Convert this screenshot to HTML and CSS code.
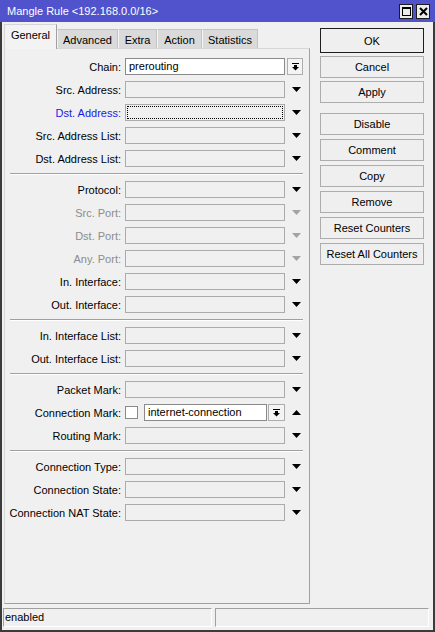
FILE: index.html
```html
<!DOCTYPE html>
<html>
<head>
<meta charset="utf-8">
<link rel="stylesheet" href="styles.css">
</head>
<body>
<div class="win">
  <div class="titlebar">
    <span class="title">Mangle Rule &lt;192.168.0.0/16&gt;</span>
    <div class="tbtns">
      <span class="tbtn"><svg width="9" height="9" viewBox="0 0 9 9"><rect x="0.5" y="0.5" width="8" height="8" fill="none" stroke="#000"/><rect x="0" y="0" width="9" height="2" fill="#000"/></svg></span>
      <span class="tbtn"><svg width="9" height="9" viewBox="0 0 9 9"><path d="M1 1 L8 8 M8 1 L1 8" stroke="#000" stroke-width="2"/></svg></span>
    </div>
  </div>
  <div class="body">
    <div class="main">
      <div class="left">
        <div class="tabs">
          <div class="tab active w1">General</div>
          <div class="tab w2">Advanced</div>
          <div class="tab w3">Extra</div>
          <div class="tab w4">Action</div>
          <div class="tab w5">Statistics</div>
        </div>
        <div class="panel">
          <div class="row"><span class="lbl">Chain:</span><div class="field edit">prerouting</div><div class="trail start"><span class="ddbtn"><svg width="7" height="8" viewBox="0 0 7 8"><rect x="0" y="0" width="7" height="1"/><rect x="2" y="2" width="3" height="2"/><polygon points="0,4 7,4 3.5,7.5"/></svg></span></div></div>
          <div class="row"><span class="lbl">Src. Address:</span><div class="field"></div><div class="trail"><svg class="arr" width="9" height="5" viewBox="0 0 9 5"><polygon points="0,0 9,0 4.5,5"/></svg></div></div>
          <div class="row"><span class="lbl blue">Dst. Address:</span><div class="field focus"></div><div class="trail"><svg class="arr" width="9" height="5" viewBox="0 0 9 5"><polygon points="0,0 9,0 4.5,5"/></svg></div></div>
          <div class="row"><span class="lbl">Src. Address List:</span><div class="field"></div><div class="trail"><svg class="arr" width="9" height="5" viewBox="0 0 9 5"><polygon points="0,0 9,0 4.5,5"/></svg></div></div>
          <div class="row"><span class="lbl">Dst. Address List:</span><div class="field"></div><div class="trail"><svg class="arr" width="9" height="5" viewBox="0 0 9 5"><polygon points="0,0 9,0 4.5,5"/></svg></div></div>
          <div class="sep"></div>
          <div class="row"><span class="lbl">Protocol:</span><div class="field"></div><div class="trail"><svg class="arr" width="9" height="5" viewBox="0 0 9 5"><polygon points="0,0 9,0 4.5,5"/></svg></div></div>
          <div class="row"><span class="lbl dis">Src. Port:</span><div class="field"></div><div class="trail"><svg class="arr dis" width="9" height="5" viewBox="0 0 9 5"><polygon points="0,0 9,0 4.5,5"/></svg></div></div>
          <div class="row"><span class="lbl dis">Dst. Port:</span><div class="field"></div><div class="trail"><svg class="arr dis" width="9" height="5" viewBox="0 0 9 5"><polygon points="0,0 9,0 4.5,5"/></svg></div></div>
          <div class="row"><span class="lbl dis">Any. Port:</span><div class="field"></div><div class="trail"><svg class="arr dis" width="9" height="5" viewBox="0 0 9 5"><polygon points="0,0 9,0 4.5,5"/></svg></div></div>
          <div class="row"><span class="lbl">In. Interface:</span><div class="field"></div><div class="trail"><svg class="arr" width="9" height="5" viewBox="0 0 9 5"><polygon points="0,0 9,0 4.5,5"/></svg></div></div>
          <div class="row"><span class="lbl">Out. Interface:</span><div class="field"></div><div class="trail"><svg class="arr" width="9" height="5" viewBox="0 0 9 5"><polygon points="0,0 9,0 4.5,5"/></svg></div></div>
          <div class="sep"></div>
          <div class="row"><span class="lbl">In. Interface List:</span><div class="field"></div><div class="trail"><svg class="arr" width="9" height="5" viewBox="0 0 9 5"><polygon points="0,0 9,0 4.5,5"/></svg></div></div>
          <div class="row"><span class="lbl">Out. Interface List:</span><div class="field"></div><div class="trail"><svg class="arr" width="9" height="5" viewBox="0 0 9 5"><polygon points="0,0 9,0 4.5,5"/></svg></div></div>
          <div class="sep"></div>
          <div class="row"><span class="lbl">Packet Mark:</span><div class="field"></div><div class="trail"><svg class="arr" width="9" height="5" viewBox="0 0 9 5"><polygon points="0,0 9,0 4.5,5"/></svg></div></div>
          <div class="row"><span class="lbl">Connection Mark:</span>
            <div class="combo"><span class="chk"></span><div class="field edit short">internet-connection</div><span class="ddbtn wide"><svg width="7" height="8" viewBox="0 0 7 8"><rect x="0" y="0" width="7" height="1"/><rect x="2" y="2" width="3" height="2"/><polygon points="0,4 7,4 3.5,7.5"/></svg></span></div>
            <div class="trail"><svg class="arr" width="9" height="5" viewBox="0 0 9 5"><polygon points="0,5 9,5 4.5,0"/></svg></div></div>
          <div class="row"><span class="lbl">Routing Mark:</span><div class="field"></div><div class="trail"><svg class="arr" width="9" height="5" viewBox="0 0 9 5"><polygon points="0,0 9,0 4.5,5"/></svg></div></div>
          <div class="sep"></div>
          <div class="row"><span class="lbl">Connection Type:</span><div class="field"></div><div class="trail"><svg class="arr" width="9" height="5" viewBox="0 0 9 5"><polygon points="0,0 9,0 4.5,5"/></svg></div></div>
          <div class="row"><span class="lbl">Connection State:</span><div class="field"></div><div class="trail"><svg class="arr" width="9" height="5" viewBox="0 0 9 5"><polygon points="0,0 9,0 4.5,5"/></svg></div></div>
          <div class="row"><span class="lbl">Connection NAT State:</span><div class="field"></div><div class="trail"><svg class="arr" width="9" height="5" viewBox="0 0 9 5"><polygon points="0,0 9,0 4.5,5"/></svg></div></div>
        </div>
      </div>
      <div class="buttons">
        <div class="btn ok">OK</div>
        <div class="btn">Cancel</div>
        <div class="btn">Apply</div>
        <div class="btn gap">Disable</div>
        <div class="btn">Comment</div>
        <div class="btn">Copy</div>
        <div class="btn">Remove</div>
        <div class="btn">Reset Counters</div>
        <div class="btn">Reset All Counters</div>
      </div>
    </div>
    <div class="status">
      <div class="sfield s1">enabled</div>
      <div class="sfield s2"></div>
    </div>
  </div>
</div>
</body>
</html>
```

FILE: styles.css
```css
html, body {
  margin: 0;
  padding: 0;
}
body {
  width: 435px;
  height: 632px;
  overflow: hidden;
  background: #f0f0f0;
  font-family: "Liberation Sans", Arial, sans-serif;
  font-size: 11px;
  color: #000;
}
.win {
  width: 435px;
  height: 632px;
  display: flex;
  flex-direction: column;
}
.titlebar {
  height: 22px;
  background: #5053cb;
  display: flex;
  align-items: center;
  justify-content: space-between;
  padding: 0 5px 0 7px;
  box-sizing: border-box;
  flex: none;
}
.title {
  color: #fff;
  font-size: 11px;
}
.tbtns {
  display: flex;
  gap: 3px;
}
.tbtn {
  width: 14px;
  height: 15px;
  box-sizing: border-box;
  border: 1px solid #1c1c1c;
  background: #ececec;
  display: flex;
  align-items: center;
  justify-content: center;
}
.body {
  flex: 1;
  border: 2px solid #3b3b3b;
  border-top: none;
  display: flex;
  flex-direction: column;
}
.main {
  display: flex;
  padding: 3px 0 0 2px;
  height: 583px;
  box-sizing: border-box;
}
.left {
  width: 306px;
  display: flex;
  flex-direction: column;
}
.tabs {
  height: 24px;
  display: flex;
  align-items: flex-end;
  margin-bottom: -1px;
}
.tab {
  height: 20px;
  box-sizing: border-box;
  background: #dadada;
  border: 1px solid #c4c4c4;
  border-left-color: #f4f4f4;
  border-bottom: 1px solid #a8a8a8;
  display: flex;
  align-items: center;
  justify-content: center;
  padding-top: 1px;
}
.tab.active {
  height: 25px;
  background: #f3f3f3;
  border: 1px solid #d6d6d6;
  border-right-color: #a0a0a0;
  border-bottom: none;
  position: relative;
  z-index: 1;
  padding-top: 0;
  padding-bottom: 4px;
}
.w1 { width: 53px; }
.w2 { width: 61px; }
.w3 { width: 39px; }
.w4 { width: 45px; }
.w5 { width: 56px; }
.panel {
  height: 556px;
  box-sizing: border-box;
  border: 1px solid #d6d6d6;
  border-right-color: #a0a0a0;
  border-bottom-color: #a0a0a0;
  padding-top: 6px;
}
.row {
  height: 23px;
  display: flex;
  align-items: center;
}
.lbl {
  width: 120px;
  box-sizing: border-box;
  padding-right: 4px;
  text-align: right;
  white-space: nowrap;
}
.lbl.blue { color: #1a1ae6; }
.lbl.dis { color: #8c8c8c; }
.field {
  width: 160px;
  height: 17px;
  box-sizing: border-box;
  border: 1px solid #ababab;
  background: #f0f0f0;
  padding: 0 3px;
  line-height: 15px;
  white-space: nowrap;
  overflow: hidden;
}
.field.edit {
  background: #fff;
  border-color: #8a8a8a;
}
.field.focus {
  outline: 1px dotted #000;
  outline-offset: -3px;
}
.field.short {
  width: 123px;
  margin-right: 1px;
}
.combo {
  width: 160px;
  display: flex;
  align-items: center;
}
.chk {
  width: 13px;
  height: 13px;
  box-sizing: border-box;
  border: 1px solid #8a8a8a;
  background: #fff;
  margin-right: 6px;
}
.trail {
  width: 18px;
  margin-left: 2px;
  display: flex;
  justify-content: center;
  align-items: center;
}
.trail.start {
  justify-content: flex-start;
}
.ddbtn {
  width: 16px;
  height: 17px;
  box-sizing: border-box;
  border: 1px solid #adadad;
  background: #f4f4f4;
  display: flex;
  align-items: center;
  justify-content: center;
  fill: #000;
}
.ddbtn.wide { width: 17px; }
.arr { fill: #000; }
.arr.dis { fill: #a3a3a3; }
.sep {
  height: 8px;
  margin: 0 6px 0 5px;
  display: flex;
  flex-direction: column;
  justify-content: center;
}
.sep::before {
  content: "";
  display: block;
  height: 1px;
  background: #a0a0a0;
  border-bottom: 1px solid #fff;
}
.buttons {
  width: 104px;
  margin-left: 10px;
  display: flex;
  flex-direction: column;
  padding-top: 3px;
}
.btn {
  height: 22px;
  box-sizing: border-box;
  border: 1px solid #adadad;
  background: #efefef;
  display: flex;
  align-items: center;
  justify-content: center;
  margin-top: 4px;
  white-space: nowrap;
}
.btn.ok {
  height: 25px;
  margin-top: 0;
  border-color: #1e1e1e;
}
.btn.ok + .btn { margin-top: 3px; }
.btn.ok + .btn + .btn { margin-top: 3px; }
.btn.gap { margin-top: 10px; }
.status {
  display: flex;
  gap: 3px;
  padding: 3px 0 0 1px;
}
.sfield {
  height: 19px;
  box-sizing: border-box;
  border: 1px solid #a0a0a0;
  border-right-color: #ffffff;
  border-bottom-color: #ffffff;
  padding-left: 1px;
  line-height: 17px;
}
.s1 { width: 209px; }
.s2 { width: 214px; }
```
